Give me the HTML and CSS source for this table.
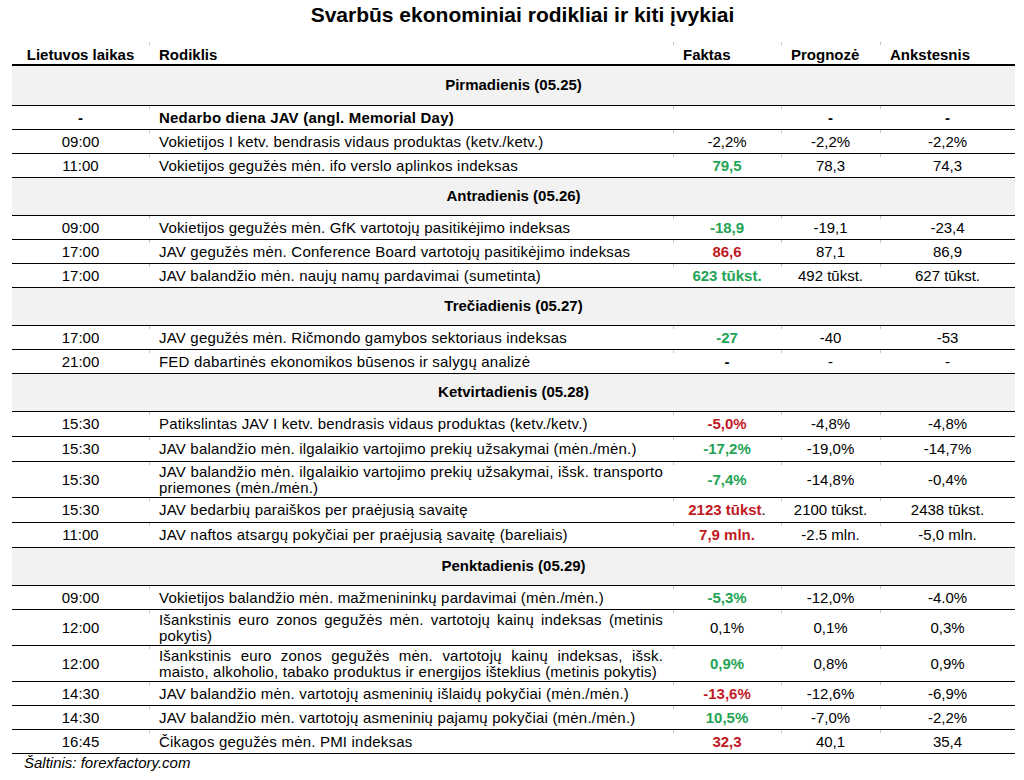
FILE: index.html
```html
<!DOCTYPE html>
<html lang="lt">
<head>
<meta charset="utf-8">
<title>Svarbūs ekonominiai rodikliai ir kiti įvykiai</title>
<link rel="stylesheet" href="styles.css">
</head>
<body>
<div class="page">
  <h1 class="title">Svarbūs ekonominiai rodikliai ir kiti įvykiai</h1>
  <table class="cal">
    <colgroup>
      <col class="c-time"><col class="c-name"><col class="c-fact"><col class="c-prog"><col class="c-prev">
    </colgroup>
    <thead>
      <tr class="head">
        <th class="h-time">Lietuvos laikas</th>
        <th>Rodiklis</th>
        <th>Faktas</th>
        <th>Prognozė</th>
        <th>Ankstesnis</th>
      </tr>
    </thead>
    <tbody>
      <tr class="day first"><td colspan="5">Pirmadienis (05.25)</td></tr>
      <tr class="row">
        <td class="t b">-</td><td class="n b">Nedarbo diena JAV (angl. Memorial Day)</td><td class="v"></td><td class="v b">-</td><td class="v b">-</td>
      </tr>
      <tr class="row">
        <td class="t">09:00</td><td class="n">Vokietijos I ketv. bendrasis vidaus produktas (ketv./ketv.)</td><td class="v">-2,2%</td><td class="v">-2,2%</td><td class="v">-2,2%</td>
      </tr>
      <tr class="row">
        <td class="t">11:00</td><td class="n">Vokietijos gegužės mėn. ifo verslo aplinkos indeksas</td><td class="v b up">79,5</td><td class="v">78,3</td><td class="v">74,3</td>
      </tr>

      <tr class="day"><td colspan="5">Antradienis (05.26)</td></tr>
      <tr class="row">
        <td class="t">09:00</td><td class="n">Vokietijos gegužės mėn. GfK vartotojų pasitikėjimo indeksas</td><td class="v b up">-18,9</td><td class="v">-19,1</td><td class="v">-23,4</td>
      </tr>
      <tr class="row">
        <td class="t">17:00</td><td class="n">JAV gegužės mėn. Conference Board vartotojų pasitikėjimo indeksas</td><td class="v b down">86,6</td><td class="v">87,1</td><td class="v">86,9</td>
      </tr>
      <tr class="row">
        <td class="t">17:00</td><td class="n">JAV balandžio mėn. naujų namų pardavimai (sumetinta)</td><td class="v b up">623 tūkst.</td><td class="v">492 tūkst.</td><td class="v">627 tūkst.</td>
      </tr>

      <tr class="day"><td colspan="5">Trečiadienis (05.27)</td></tr>
      <tr class="row">
        <td class="t">17:00</td><td class="n">JAV gegužės mėn. Ričmondo gamybos sektoriaus indeksas</td><td class="v b up">-27</td><td class="v">-40</td><td class="v">-53</td>
      </tr>
      <tr class="row">
        <td class="t">21:00</td><td class="n">FED dabartinės ekonomikos būsenos ir salygų analizė</td><td class="v b">-</td><td class="v">-</td><td class="v">-</td>
      </tr>

      <tr class="day"><td colspan="5">Ketvirtadienis (05.28)</td></tr>
      <tr class="row r25">
        <td class="t">15:30</td><td class="n">Patikslintas JAV I ketv. bendrasis vidaus produktas (ketv./ketv.)</td><td class="v b down">-5,0%</td><td class="v">-4,8%</td><td class="v">-4,8%</td>
      </tr>
      <tr class="row r25">
        <td class="t">15:30</td><td class="n">JAV balandžio mėn. ilgalaikio vartojimo prekių užsakymai (mėn./mėn.)</td><td class="v b up">-17,2%</td><td class="v">-19,0%</td><td class="v">-14,7%</td>
      </tr>
      <tr class="row two">
        <td class="t">15:30</td><td class="n">JAV balandžio mėn. ilgalaikio vartojimo prekių užsakymai, išsk. transporto priemones (mėn./mėn.)</td><td class="v b up">-7,4%</td><td class="v">-14,8%</td><td class="v">-0,4%</td>
      </tr>
      <tr class="row r25">
        <td class="t">15:30</td><td class="n">JAV bedarbių paraiškos per praėjusią savaitę</td><td class="v b down">2123 tūkst<span class="dot">.</span></td><td class="v">2100 tūkst.</td><td class="v">2438 tūkst.</td>
      </tr>
      <tr class="row r25">
        <td class="t">11:00</td><td class="n">JAV naftos atsargų pokyčiai per praėjusią savaitę (bareliais)</td><td class="v b down">7,9 mln.</td><td class="v">-2.5 mln.</td><td class="v">-5,0 mln.</td>
      </tr>

      <tr class="day"><td colspan="5">Penktadienis (05.29)</td></tr>
      <tr class="row">
        <td class="t">09:00</td><td class="n">Vokietijos balandžio mėn. mažmenininkų pardavimai (mėn./mėn.)</td><td class="v b up">-5,3%</td><td class="v">-12,0%</td><td class="v">-4.0%</td>
      </tr>
      <tr class="row two">
        <td class="t">12:00</td><td class="n">Išankstinis euro zonos gegužės mėn. vartotojų kainų indeksas (metinis pokytis)</td><td class="v">0,1%</td><td class="v">0,1%</td><td class="v">0,3%</td>
      </tr>
      <tr class="row two">
        <td class="t">12:00</td><td class="n">Išankstinis euro zonos gegužės mėn. vartotojų kainų indeksas, išsk. maisto, alkoholio, tabako produktus ir energijos išteklius (metinis pokytis)</td><td class="v b up">0,9%</td><td class="v">0,8%</td><td class="v">0,9%</td>
      </tr>
      <tr class="row">
        <td class="t">14:30</td><td class="n">JAV balandžio mėn. vartotojų asmeninių išlaidų pokyčiai (mėn./mėn.)</td><td class="v b down">-13,6%</td><td class="v">-12,6%</td><td class="v">-6,9%</td>
      </tr>
      <tr class="row">
        <td class="t">14:30</td><td class="n">JAV balandžio mėn. vartotojų asmeninių pajamų pokyčiai (mėn./mėn.)</td><td class="v b up">10,5%</td><td class="v">-7,0%</td><td class="v">-2,2%</td>
      </tr>
      <tr class="row">
        <td class="t">16:45</td><td class="n">Čikagos gegužės mėn. PMI indeksas</td><td class="v b down">32,3</td><td class="v">40,1</td><td class="v">35,4</td>
      </tr>
    </tbody>
  </table>
  <p class="source">Šaltinis: forexfactory.com</p>
</div>
</body>
</html>
```
FILE: styles.css
```css
* { box-sizing: border-box; }

html, body {
  margin: 0;
  padding: 0;
  background: #fff;
}

body {
  font-family: "Liberation Sans", Arial, sans-serif;
  font-size: 15px;
  color: #000;
}

.page {
  padding-left: 12px;
  width: 1015px;
}

.title {
  margin: 0;
  height: 42px;
  padding-top: 4px;
  padding-left: 18px;
  font-size: 21px;
  line-height: 22px;
  font-weight: bold;
  text-align: center;
}

.cal {
  width: 1003px;
  border-collapse: collapse;
  table-layout: fixed;
}

.c-time { width: 137px; }
.c-name { width: 524px; }
.c-fact { width: 108px; }
.c-prog { width: 99px; }
.c-prev { width: 135px; }

.cal th,
.cal td {
  padding: 0 10px;
  line-height: 16px;
  vertical-align: middle;
}

.cal th + th,
.cal td + td {
  background-image: linear-gradient(#c8c8c8, #c8c8c8);
  background-size: 1px 3px;
  background-position: left top;
  background-repeat: no-repeat;
}

.head th {
  height: 23px;
  font-weight: bold;
  text-align: left;
  border-bottom: 2px solid #000;
  padding-top: 3px;
}

.head .h-time {
  text-align: center;
}

.day td {
  height: 38px;
  background: #f2f2f2;
  font-weight: bold;
  text-align: center;
  border-bottom: 1px solid #000;
}

.day.first td { height: 40px; }

.row td {
  height: 24px;
  border-bottom: 1px solid #000;
  padding-top: 1px;
}

.row.r25 td { height: 25px; }
.row.two td { height: 36px; }

.t { text-align: center; }

.n {
  text-align: justify;
  padding-right: 12px;
  letter-spacing: 0.2px;
}

.v { text-align: center; }

.b { font-weight: bold; }

.up { color: #23a455; }
.down { color: #bf1a1f; }

.dot {
  color: #000;
  font-weight: normal;
}

.source {
  margin: 0;
  padding-left: 12px;
  font-style: italic;
  line-height: 18px;
}
```
